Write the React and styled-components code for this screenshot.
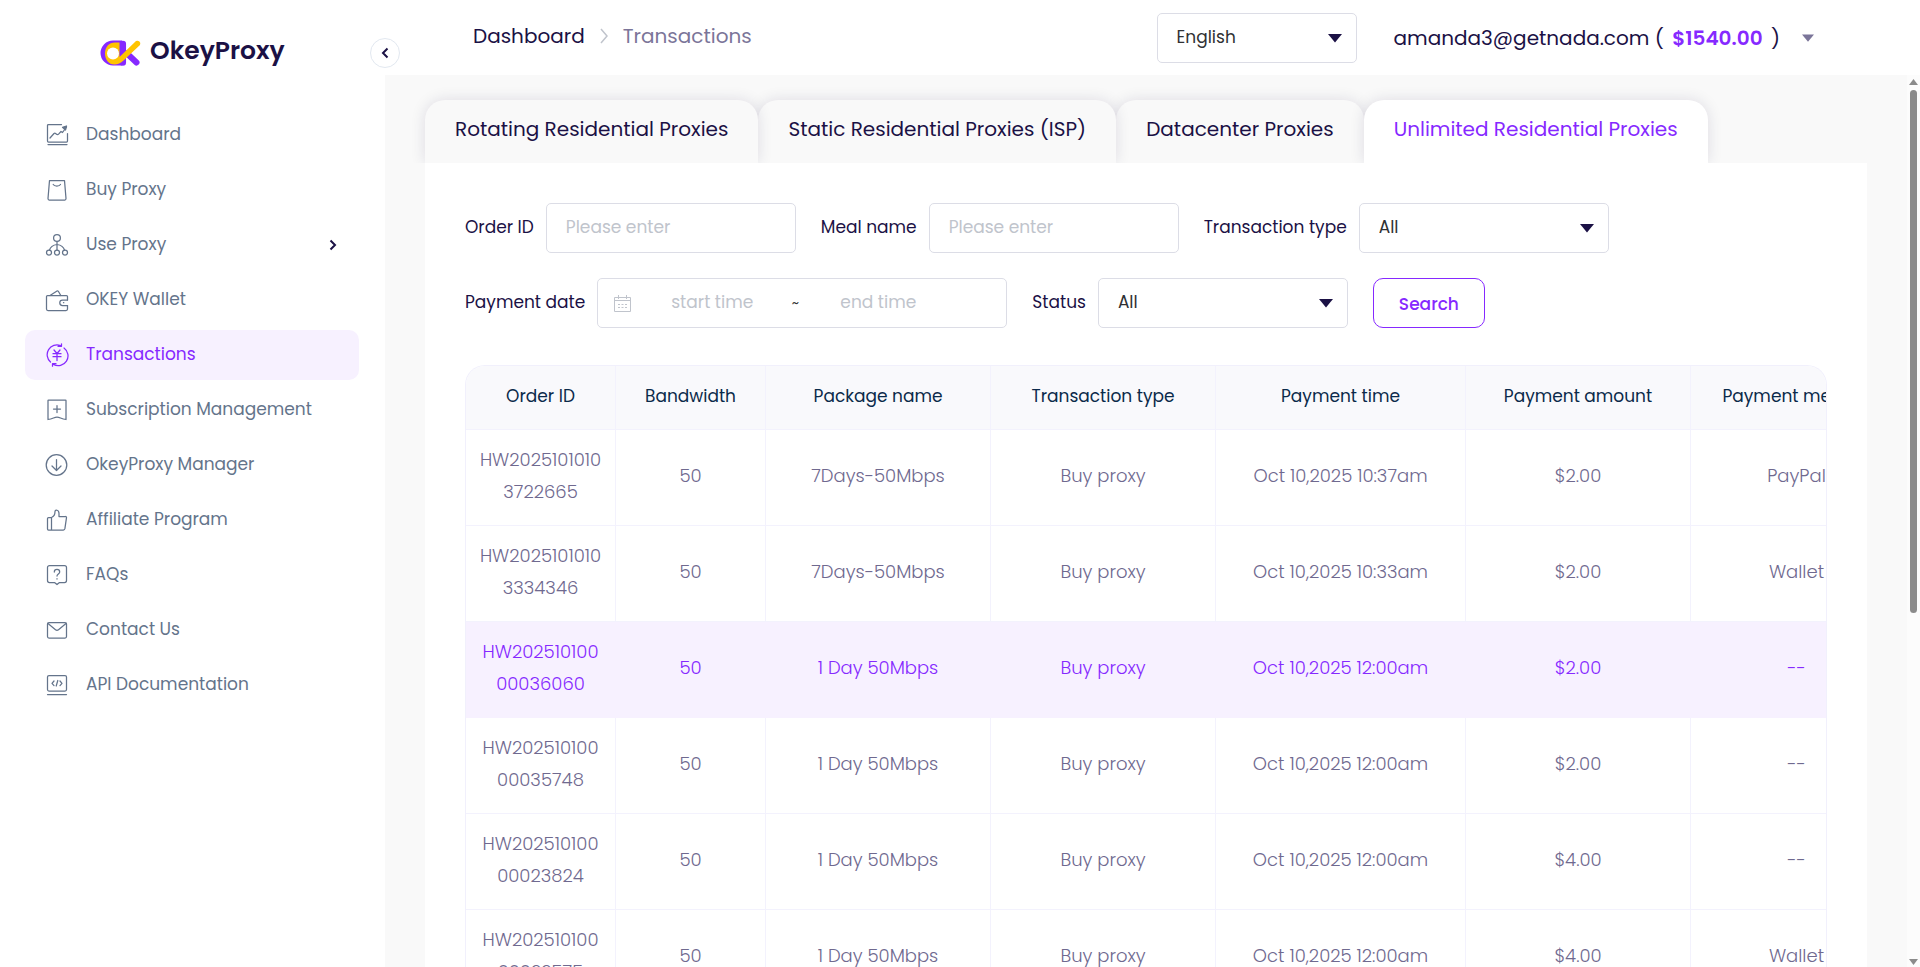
import React from "react";
import styled, { createGlobalStyle, css } from "styled-components";

const GlobalStyle = createGlobalStyle`
  *, *::before, *::after { box-sizing: border-box; }
  html, body, #root { height: 100%; }
  body {
    margin: 0;
    font-family: Poppins, Inter, "Liberation Sans", sans-serif;
    font-size: 17px;
    color: #1b1145;
    background: #fff;
  }
  button, input, select { font: inherit; }
`;

const INK = "#1b1145";
const PURPLE = "#8629ff";
const MUTED = "#7b7599";
const LINE = "#dcdde6";

const Shell = styled.div`
  display: grid;
  grid-template-columns: 385px minmax(0, 1fr);
  grid-template-rows: minmax(0, 1fr);
  height: 100vh;
  overflow: hidden;
`;

const Sidebar = styled.aside`
  padding: 33px 26px 0 25px;
  background: #fff;
`;

const Brand = styled.a`
  display: flex;
  align-items: center;
  gap: 9px;
  height: 36px;
  margin: 0 0 41px 75px;
  color: ${INK};
  font-size: 25px;
  font-weight: 600;
  line-height: 32px;
  text-decoration: none;
  > svg { margin-top: 3px; }
`;

const NavList = styled.ul`
  display: grid;
  gap: 5px;
  margin: 0;
  padding: 0;
  list-style: none;
`;

const NavLink = styled.a`
  display: flex;
  align-items: center;
  gap: 17px;
  height: 50px;
  padding: 0 22px 0 20px;
  border-radius: 10px;
  color: ${(p) => (p.$active ? PURPLE : "#64748b")};
  background: ${(p) => (p.$active ? "#f7f1ff" : "transparent")};
  text-decoration: none;
`;

const NavText = styled.span`
  flex: 1;
  padding-bottom: 3px;
`;

const Main = styled.div`
  display: grid;
  grid-template-rows: 75px minmax(0, 1fr);
  min-width: 0;
`;

const Header = styled.header`
  display: flex;
  align-items: center;
  justify-content: space-between;
  padding: 0 106px 0 88px;
  background: #fff;
`;

const Crumbs = styled.nav`
  display: flex;
  align-items: center;
  gap: 15px;
  padding-bottom: 3px;
  font-size: 20px;
`;

const Crumb = styled.a`
  color: ${(p) => (p.$current ? MUTED : INK)};
  text-decoration: none;
`;

const HeaderTools = styled.div`
  display: flex;
  align-items: center;
  gap: 37px;
`;

const Account = styled.button`
  display: flex;
  align-items: center;
  gap: 22px;
  padding: 0;
  border: 0;
  background: none;
  color: ${INK};
  font-size: 20px;
  white-space: pre;
`;

const Balance = styled.strong`
  margin: 0 3px;
  color: ${PURPLE};
  font-weight: 600;
`;

const Toggle = styled.button`
  position: absolute;
  top: 38px;
  left: 370px;
  display: grid;
  place-items: center;
  width: 30px;
  height: 30px;
  padding: 0;
  border: 1px solid #e2e8f0;
  border-radius: 50%;
  background: #fff;
  color: ${INK};
`;

const Body = styled.div`
  display: grid;
  grid-template-columns: minmax(0, 1fr) 13px;
  grid-template-rows: minmax(0, 1fr);
  min-height: 0;
  background: #f9f9f9;
`;

const Content = styled.main`
  min-width: 0;
  padding: 25px 40px 0;
  overflow: hidden;
`;

const Tabs = styled.div`
  display: flex;
  overflow: hidden;
  margin: -25px -40px 0;
  padding: 25px 40px 0;
`;

const Tab = styled.button`
  position: relative;
  z-index: ${(p) => p.$level};
  height: 63px;
  padding: 0 30px 6px;
  border: 0;
  border-radius: 20px 20px 0 0;
  box-shadow: 0 0 15px rgba(27, 17, 69, 0.12);
  background: ${(p) => (p.$active ? "#fff" : "#f9f9f9")};
  color: ${(p) => (p.$active ? PURPLE : INK)};
  font-size: 20px;
  white-space: nowrap;
`;

const Panel = styled.section`
  padding: 40px 40px 0;
  background: #fff;
`;

const Filters = styled.form`
  display: flex;
  flex-wrap: wrap;
  gap: 25px;
  max-width: 1180px;
`;

const Field = styled.div`
  display: flex;
  align-items: center;
  gap: 12px;
`;

const Label = styled.label`
  padding-bottom: 2px;
  white-space: nowrap;
`;

const box = css`
  height: 50px;
  border: 1px solid ${LINE};
  border-radius: 5px;
  background: #fff;
  outline: 0;
`;

const TextInput = styled.input`
  ${box}
  width: 250px;
  padding: 0 19px 2px;
  color: ${INK};
  &::placeholder { color: #c0c4cc; opacity: 1; }
`;

const SelectWrap = styled.div`
  display: grid;
  align-items: center;
  width: ${(p) => (p.$compact ? 200 : 250)}px;
  > * { grid-area: 1 / 1; }
  > svg { justify-self: end; margin-right: 15px; pointer-events: none; }
`;

const NativeSelect = styled.select`
  ${box}
  width: 100%;
  padding: 0 19px 2px;
  appearance: none;
  color: #303133;
`;

const DateRange = styled.div`
  ${box}
  display: flex;
  align-items: center;
  width: 410px;
  padding-left: 16px;
  color: #303133;
`;

const DateInput = styled.input`
  width: 142px;
  padding: 0 0 2px;
  border: 0;
  outline: 0;
  background: none;
  text-align: center;
  &::placeholder { color: #c0c4cc; opacity: 1; }
  &:first-of-type { margin-left: 10px; }
`;

const Tilde = styled.span`
  width: 24px;
  font-size: 14px;
  text-align: center;
`;

const SearchButton = styled.button`
  width: 112px;
  height: 50px;
  padding: 2px 0 0;
  border: 1px solid ${PURPLE};
  border-radius: 10px;
  background: #fff;
  color: ${PURPLE};
  font-weight: 500;
`;

const TableFrame = styled.div`
  margin-top: 37px;
  overflow: hidden;
  border: solid #f1f0fc;
  border-width: 1px 1px 0;
  border-radius: 20px 20px 0 0;
`;

const Table = styled.table`
  width: 1437px;
  table-layout: fixed;
  border-collapse: separate;
  border-spacing: 0;
`;

const Th = styled.th`
  height: 64px;
  padding: 0 0 4px;
  border: solid #f3f2fd;
  border-width: 0 1px 1px 0;
  background: #f9f9fc;
  color: #0b2a4a;
  font-weight: 400;
`;

const Td = styled.td`
  height: 96px;
  padding: 0 0 3px;
  border: solid #f3f2fd;
  border-width: 0 1px 1px 0;
  font-size: 18px;
  font-weight: 300;
  line-height: 32px;
  text-align: center;
`;

const Tr = styled.tr`
  color: ${(p) => (p.$active ? PURPLE : "#6f698f")};
  background: ${(p) => (p.$active ? "#f7f1ff" : "#fff")};
  ${(p) => p.$active && css`td { border-color: #f7f1ff; }`}
`;

const ScrollBar = styled.div`
  display: flex;
  flex-direction: column;
  align-items: center;
  gap: 5px;
  padding: 4px 0 2px;
  background: #fcfcfc;
`;

const Thumb = styled.div`
  flex: 0 0 59%;
  width: 7px;
  border-radius: 4px;
  background: #8b8b8b;
`;

const ArrowEnd = styled.div`
  display: flex;
  margin-top: auto;
`;

const Icon = ({ children }) => (
  <svg width="24" height="24" viewBox="0 0 24 24" fill="none" stroke="currentColor" strokeWidth="1.25" strokeLinecap="round" strokeLinejoin="round" aria-hidden="true">
    {children}
  </svg>
);

const icons = {
  dashboard: <><path d="M16.500 1.500H3.500a1 1 0 0 0-1 1v15.500a1 1 0 0 0 1 1h18a1 1 0 0 0 1-1v-7.500M3 21.500h19" /><path d="M5 15l4-4.500c1-.8 1.500 0 2.500.7s1.700.3 2.300-.3l2.200-2.400 1.500 1L21.500 4" /><path d="M17.500 4.300l4-1.300-1 4z" fill="currentColor" /></>,
  bag: <><path d="M4.500 2.500h15l1.500 18c0 .9-.4 1.500-1.200 1.500H4.200c-.8 0-1.200-.6-1.200-1.500z" /><path d="M8.200 6.500c1.300 2 6 2 7.300 0" /></>,
  nodes: <><circle cx="12" cy="5" r="3.400" /><circle cx="4" cy="19.500" r="2.500" /><circle cx="12" cy="19.500" r="2.500" /><circle cx="20" cy="19.500" r="2.500" /><path d="M12 8.500v8.500M12 11.500c-3.500.5-6.500 2-7.500 5.500M12 11.500c3.500.5 6.500 2 7.500 5.500" /></>,
  wallet: <><path d="M22.500 12V8.500a1 1 0 0 0-1-1h-19a1 1 0 0 0-1 1v12.500a1.500 1.500 0 0 0 1.500 1.500h18a1.500 1.500 0 0 0 1.500-1.500v-3.500" /><path d="M5 7.500l7-4.500c.5-.3 1-.1 1.300.3l2.500 4.200M22.500 12h-5a2.700 2.700 0 0 0 0 5.500h5M18.500 14.700h.3" /></>,
  yen: <><path d="M15.500 2.500a9.800 9.800 0 0 0-10 16.500M19 5a9.800 9.800 0 0 1-10.500 16.500M16.500.8v2.500h-3.500M7.500 23.200v-2.500h3.500" /><path d="M9 7l3 3.500L15 7M8 10.700h8M8 13.700h8M12 10.500v7" /></>,
  bookmark: <><path d="M3.500 2h17a.5.5 0 0 1 .5.500v19c-5-.5-6-2.500-9-2.500s-4 2-9 2.500V2.500a.5.5 0 0 1 .5-.5zM12 7.500v7M8.500 11h7" /></>,
  download: <><circle cx="11.500" cy="12" r="10.300" /><path d="M11.500 6.500v11M7 13l4.500 4.500L16 13" /></>,
  thumb: <><path d="M6.500 9.500h-3a1 1 0 0 0-1 1v10.500a1 1 0 0 0 1 1h3zM6.500 9.500c2.500-1 3.500-3.500 3.500-6 0-2 4-2 4 2v3h6.500a1 1 0 0 1 1 1.200l-1.600 11c-.2.900-.7 1.300-1.500 1.300H6.500" /></>,
  faq: <><path d="M4.500 2.500h15a2 2 0 0 1 2 2v13a2 2 0 0 1-2 2h-5L12 21.500l-2.500-2h-5a2 2 0 0 1-2-2v-13a2 2 0 0 1 2-2z" /><path d="M9.300 9c0-3.500 5.400-3.500 5.400 0 0 2-2.700 2-2.700 4M12 15.700v.3" /></>,
  mail: <><rect x="2.500" y="4.500" width="19" height="15.500" rx="1.500" /><path d="M3 5.500l7.500 6.200c1 .8 2 .8 3 0L21 5.500" /></>,
  api: <><rect x="2.500" y="2.500" width="19" height="15.500" rx="1.500" /><path d="M2.500 21.500h19M9 8L7 10.300l2 2.300M15 8l2 2.300-2 2.300M12.800 7.500l-1.600 5.500" /></>,
};

const Caret = ({ small }) => (
  <svg width={small ? 12 : 14} height={small ? 8 : 10} viewBox="0 0 14 9" aria-hidden="true">
    <path d="M0 .5h14L7 9z" fill={small ? MUTED : INK} />
  </svg>
);

const Chevron = ({ left }) => (
  <svg width="8" height="12" viewBox="0 0 8 12" fill="none" stroke={INK} strokeWidth="2" aria-hidden="true">
    <path d={left ? "M6.500 1.500L2 6l4.500 4.500" : "M1.500 1.500L6 6l-4.500 4.500"} />
  </svg>
);

const Logo = () => (
  <svg width="41" height="26" viewBox="0 0 41 26" aria-hidden="true">
    <path d="M13 .5h9V25.500h-9a12.500 12.500 0 0 1 0-25z" fill="#8629ff" />
    <path d="M22.800 4v18.500" stroke="#8629ff" strokeWidth="6.500" strokeLinecap="round" />
    <path d="M27 13.500l9.500 9" stroke="#8629ff" strokeWidth="6" strokeLinecap="round" />
    <path d="M19.500 2.500V17L36 1a3 3 0 0 1 4 4L23.500 20.500C20.500 23.400 18 24.500 14.500 24.500 8.500 24.500 5 19.500 5 13.500 5 7 9 2.500 15 2.500z" fill="#ffc400" />
    <circle cx="13" cy="13.500" r="6" fill="#fff" />
  </svg>
);

const Triangle = ({ down }) => (
  <svg width="9" height="6" viewBox="0 0 9 6" aria-hidden="true">
    <path d={down ? "M0 0h9L4.500 6z" : "M0 6h9L4.500 0z"} fill="#8b8b8b" />
  </svg>
);

const nav = [
  ["dashboard", "Dashboard"],
  ["bag", "Buy Proxy"],
  ["nodes", "Use Proxy"],
  ["wallet", "OKEY Wallet"],
  ["yen", "Transactions"],
  ["bookmark", "Subscription Management"],
  ["download", "OkeyProxy Manager"],
  ["thumb", "Affiliate Program"],
  ["faq", "FAQs"],
  ["mail", "Contact Us"],
  ["api", "API Documentation"],
];

const tabs = [
  "Rotating Residential Proxies",
  "Static Residential Proxies (ISP)",
  "Datacenter Proxies",
  "Unlimited Residential Proxies",
];

const columns = [
  ["Order ID", 150],
  ["Bandwidth", 150],
  ["Package name", 225],
  ["Transaction type", 225],
  ["Payment time", 250],
  ["Payment amount", 225],
  ["Payment method", 212],
];

const rows = [
  ["HW2025101010", "3722665", "7Days-50Mbps", "Oct 10,2025 10:37am", "$2.00", "PayPal"],
  ["HW2025101010", "3334346", "7Days-50Mbps", "Oct 10,2025 10:33am", "$2.00", "Wallet"],
  ["HW202510100", "00036060", "1 Day 50Mbps", "Oct 10,2025 12:00am", "$2.00", "--"],
  ["HW202510100", "00035748", "1 Day 50Mbps", "Oct 10,2025 12:00am", "$2.00", "--"],
  ["HW202510100", "00023824", "1 Day 50Mbps", "Oct 10,2025 12:00am", "$4.00", "--"],
  ["HW202510100", "00022575", "1 Day 50Mbps", "Oct 10,2025 12:00am", "$4.00", "Wallet"],
];

function Select({ id, option, compact, ...rest }) {
  return (
    <SelectWrap $compact={compact}>
      <NativeSelect id={id} {...rest}>
        <option>{option}</option>
      </NativeSelect>
      <Caret />
    </SelectWrap>
  );
}

export default function App() {
  return (
    <>
      <GlobalStyle />
      <Shell>
        <Sidebar>
          <Brand href="#">
            <Logo />
            OkeyProxy
          </Brand>
          <NavList>
            {nav.map(([icon, text]) => (
              <li key={text}>
                <NavLink href="#" $active={icon === "yen"}>
                  <Icon>{icons[icon]}</Icon>
                  <NavText>{text}</NavText>
                  {icon === "nodes" && <Chevron />}
                </NavLink>
              </li>
            ))}
          </NavList>
        </Sidebar>
        <Main>
          <Header>
            <Crumbs aria-label="Breadcrumb">
              <Crumb href="#">Dashboard</Crumb>
              <svg width="8" height="16" viewBox="0 0 8 16" fill="none" stroke="#c0c4cc" strokeWidth="1.5" aria-hidden="true">
                <path d="M1 1l6 7-6 7" />
              </svg>
              <Crumb href="#" $current>Transactions</Crumb>
            </Crumbs>
            <HeaderTools>
              <Select compact option="English" aria-label="Language" />
              <Account type="button">
                <span>amanda3@getnada.com ( <Balance>$1540.00</Balance> )</span>
                <Caret small />
              </Account>
            </HeaderTools>
          </Header>
          <Body>
            <Content>
              <Tabs role="tablist">
                {tabs.map((text, i) => {
                  const active = i === 3;
                  return (
                    <Tab key={text} type="button" role="tab" aria-selected={active} $active={active} $level={active ? 5 : 4 - i}>
                      {text}
                    </Tab>
                  );
                })}
              </Tabs>
              <Panel>
                <Filters>
                  <Field>
                    <Label htmlFor="order">Order ID</Label>
                    <TextInput id="order" placeholder="Please enter" />
                  </Field>
                  <Field>
                    <Label htmlFor="meal">Meal name</Label>
                    <TextInput id="meal" placeholder="Please enter" />
                  </Field>
                  <Field>
                    <Label htmlFor="type">Transaction type</Label>
                    <Select id="type" option="All" />
                  </Field>
                  <Field>
                    <Label htmlFor="start">Payment date</Label>
                    <DateRange>
                      <svg width="17" height="17" viewBox="0 0 17 17" fill="none" stroke="#c0c4cc" aria-hidden="true">
                        <path d="M.5 2.500h16v14H.5zM.5 5.500h16M4.500 0v4M12.500 0v4" />
                        <path d="M4 9.500h2m1.500 0h2m1.500 0h2M4 12.500h2m1.500 0h2m1.500 0h2" />
                      </svg>
                      <DateInput id="start" placeholder="start time" />
                      <Tilde>~</Tilde>
                      <DateInput aria-label="End time" placeholder="end time" />
                    </DateRange>
                  </Field>
                  <Field>
                    <Label htmlFor="status">Status</Label>
                    <Select id="status" option="All" />
                  </Field>
                  <SearchButton type="button">Search</SearchButton>
                </Filters>
                <TableFrame>
                  <Table>
                    <colgroup>
                      {columns.map(([name, width]) => <col key={name} width={width} />)}
                    </colgroup>
                    <thead>
                      <tr>{columns.map(([name]) => <Th key={name} scope="col">{name}</Th>)}</tr>
                    </thead>
                    <tbody>
                      {rows.map(([idA, idB, pack, time, amount, method], i) => (
                        <Tr key={idB} $active={i === 2}>
                          <Td>{idA}<br />{idB}</Td>
                          <Td>50</Td>
                          <Td>{pack}</Td>
                          <Td>Buy proxy</Td>
                          <Td>{time}</Td>
                          <Td>{amount}</Td>
                          <Td>{method}</Td>
                        </Tr>
                      ))}
                    </tbody>
                  </Table>
                </TableFrame>
              </Panel>
            </Content>
            <ScrollBar aria-hidden="true">
              <Triangle />
              <Thumb />
              <ArrowEnd><Triangle down /></ArrowEnd>
            </ScrollBar>
          </Body>
        </Main>
        <Toggle type="button" aria-label="Collapse menu"><Chevron left /></Toggle>
      </Shell>
    </>
  );
}
